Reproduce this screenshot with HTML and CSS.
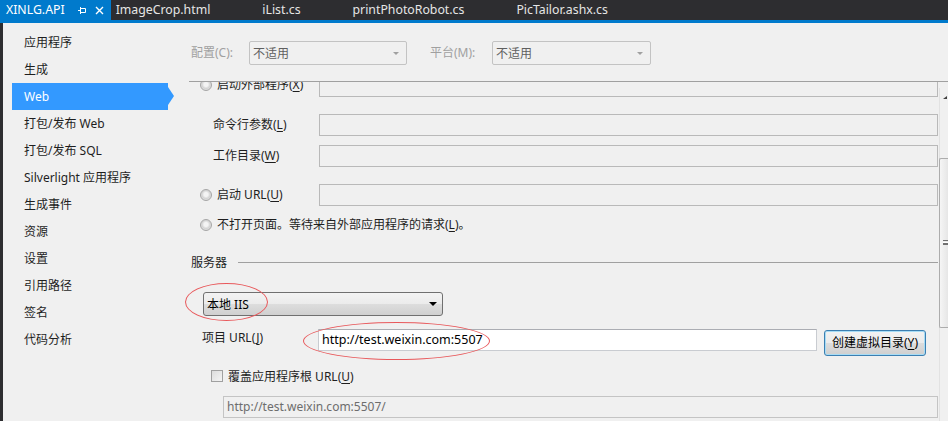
FILE: index.html
```html
<!DOCTYPE html>
<html lang="zh-CN">
<head>
<meta charset="utf-8">
<title>XINLG.API</title>
<link rel="stylesheet" href="styles.css">
</head>
<body>
<div class="tabs">
  <div class="tab active">
    <span>XINLG.API</span>
    <svg class="pin" width="8" height="8" viewBox="0 0 8 8"><path d="M0 4.5H2.5M2.5 1V8M2.5 2.5H7.5V6.5H2.5" fill="none" stroke="#fff" stroke-width="1"/></svg>
    <svg class="close" width="9" height="9" viewBox="0 0 9 9"><path d="M1 1L8 8M8 1L1 8" stroke="#fff" stroke-width="1.4"/></svg>
  </div>
  <div class="tab">ImageCrop.html</div>
  <div class="tab">iList.cs</div>
  <div class="tab">printPhotoRobot.cs</div>
  <div class="tab">PicTailor.ashx.cs</div>
</div>
<div class="tabline"></div>
<div class="app">
  <nav class="side">
    <div class="nav-item">应用程序</div>
    <div class="nav-item">生成</div>
    <div class="nav-item sel">Web</div>
    <div class="nav-item">打包/发布 Web</div>
    <div class="nav-item">打包/发布 SQL</div>
    <div class="nav-item">Silverlight 应用程序</div>
    <div class="nav-item">生成事件</div>
    <div class="nav-item">资源</div>
    <div class="nav-item">设置</div>
    <div class="nav-item">引用路径</div>
    <div class="nav-item">签名</div>
    <div class="nav-item">代码分析</div>
  </nav>
  <main class="page">
    <div class="config">
      <span class="cfg-label">配置(C):</span>
      <div class="cfg-select"><span>不适用</span><span class="cfg-arrow"></span></div>
      <span class="cfg-label plat">平台(M):</span>
      <div class="cfg-select wide"><span>不适用</span><span class="cfg-arrow"></span></div>
    </div>
    <div class="body">
      <div class="scroll">
        <div class="inner">
          <div class="row">
            <div class="rlbl first"><span class="radio"></span><span>启动外部程序(<u>X</u>)</span></div>
            <div class="field"></div>
          </div>
          <div class="row gap17">
            <div class="lbl">命令行参数(<u>L</u>)</div>
            <div class="field"></div>
          </div>
          <div class="row gap9">
            <div class="lbl">工作目录(<u>W</u>)</div>
            <div class="field"></div>
          </div>
          <div class="row gap17">
            <div class="rlbl"><span class="radio"></span><span>启动 URL(<u>U</u>)</span></div>
            <div class="field"></div>
          </div>
          <div class="rlbl solo"><span class="radio"></span><span>不打开页面。等待来自外部应用程序的请求(<u>L</u>)。</span></div>
          <div class="section"><span>服务器</span><span class="rule"></span></div>
          <div class="iis"><span>本地 IIS</span><span class="iis-arrow"></span></div>
          <div class="urlrow">
            <div class="url-label">项目 URL(<u>J</u>)</div>
            <div class="url-box">http://test.weixin.com:5507</div>
            <div class="btn">创建虚拟目录(<u>Y</u>)</div>
          </div>
          <div class="checkrow"><span class="check"></span><span>覆盖应用程序根 URL(<u>U</u>)</span></div>
          <div class="dis-box">http://test.weixin.com:5507/</div>
        </div>
      </div>
      <div class="vscroll">
        <div class="up"></div>
        <div class="thumb"><div class="grip"></div></div>
      </div>
    </div>
  </main>
</div>
<div class="mark mark-iis"></div>
<div class="mark mark-url"></div>
</body>
</html>
```
FILE: styles.css
```css
* { box-sizing: border-box; }
body {
  margin: 0;
  width: 948px;
  height: 421px;
  overflow: hidden;
  position: relative;
  background: #f0f0f0;
  font-family: "Noto Sans", "Noto Sans CJK SC", sans-serif;
  font-size: 12px;
  color: #1e1e1e;
}
u { text-decoration: underline; text-underline-offset: 2px; }

/* tabs */
.tabs {
  display: flex;
  height: 20px;
  background: #2d2d30;
  color: #e6e6e6;
  font-size: 12.3px;
  line-height: 20px;
}
.tab { padding: 0 47px 0 5px; white-space: nowrap; }
.tab.active {
  background: #007acc;
  color: #fff;
  display: flex;
  align-items: center;
  padding: 0 7px 0 6px;
}
.pin { margin-left: 13px; }
.close { margin-left: 9px; }
.tabline { height: 3px; background: #007acc; }

/* layout */
.app {
  display: flex;
  height: 398px;
  border-left: 3px solid #2d2d30;
}
.side { width: 186px; flex: none; padding-top: 6px; }
.nav-item {
  position: relative;
  margin-left: 9px;
  width: 156px;
  height: 27px;
  line-height: 27px;
  padding-left: 12px;
  white-space: nowrap;
}
.nav-item.sel { background: #3399ff; color: #fff; }
.nav-item.sel::after {
  content: "";
  position: absolute;
  left: 156px;
  top: 4px;
  border-left: 6px solid #3399ff;
  border-top: 9px solid transparent;
  border-bottom: 9px solid transparent;
}
.page { flex: 1; min-width: 0; display: flex; flex-direction: column; }

/* config row */
.config {
  height: 59px;
  display: flex;
  align-items: flex-start;
  padding: 18px 0 0 2px;
  border-bottom: 1px solid #a0a0a0;
}
.cfg-label { width: 58px; color: #a0a0a0; line-height: 24px; }
.cfg-label.plat { margin-left: 23px; width: 62px; }
.cfg-select {
  width: 158px;
  height: 24px;
  border: 1px solid #c3c3c3;
  border-radius: 2px;
  display: flex;
  align-items: center;
  justify-content: space-between;
  padding: 0 7px 0 3px;
  color: #5f5f5f;
}
.cfg-select.wide { width: 159px; }
.cfg-arrow {
  border-left: 3px solid transparent;
  border-right: 3px solid transparent;
  border-top: 3px solid #a0a0a0;
}

/* scrolled area */
.body { flex: 1; display: flex; min-height: 0; }
.scroll { flex: 1; overflow: hidden; }
.inner { margin-top: -7px; padding-right: 1px; }
.row {
  display: grid;
  grid-template-columns: 130px 1fr;
  align-items: center;
  height: 22px;
}
.gap17 { margin-top: 17px; }
.gap9 { margin-top: 9px; }
.field { height: 22px; border: 1px solid #b9b9b9; }
.lbl { padding-left: 24px; line-height: 20px; }
.rlbl {
  display: flex;
  align-items: center;
  gap: 5px;
  padding-left: 11px;
  line-height: 20px;
  white-space: nowrap;
}
.rlbl.first { margin-top: -3px; }
.rlbl.solo { margin-top: 8px; height: 22px; }
.radio {
  width: 12px;
  height: 12px;
  flex: none;
  border-radius: 50%;
  border: 1px solid #a6a6a6;
  background: radial-gradient(circle at 50% 45%, #f4f4f4 0 2px, #d4d4d4 4px, #e6e6e6 6px);
}
.section {
  display: flex;
  align-items: center;
  height: 20px;
  margin-top: 16px;
  padding-left: 2px;
}
.rule { flex: 1; height: 1px; background: #a0a0a0; margin-left: 11px; }
.iis {
  margin: 20px 0 0 14px;
  width: 240px;
  height: 24px;
  border: 1px solid #707070;
  border-radius: 3px;
  background: linear-gradient(#f3f3f3, #ebebeb 50%, #dddddd 50%, #d0d0d0);
  display: flex;
  align-items: center;
  justify-content: space-between;
  padding: 0 5px 0 3px;
  color: #000;
}
.iis-arrow {
  border-left: 4px solid transparent;
  border-right: 4px solid transparent;
  border-top: 4px solid #000;
}
.urlrow { display: flex; margin-top: 13px; height: 27px; }
.url-label { width: 129px; padding-left: 13px; line-height: 18px; }
.url-box {
  width: 499px;
  height: 22px;
  background: #fff;
  border: 1px solid #c9ccd1;
  border-top-color: #abadb3;
  padding-left: 3px;
  line-height: 20px;
  color: #000;
  font-size: 12.5px;
}
.btn {
  margin: 1px 0 0 7px;
  width: 102px;
  height: 26px;
  border: 1px solid #3c7fb1;
  border-radius: 3px;
  box-shadow: inset 0 0 0 1px #a7dcf5;
  background: linear-gradient(#f2f2f2, #ebebeb 50%, #dddddd 50%, #cfcfcf);
  text-align: center;
  line-height: 24px;
  color: #000;
}
.checkrow {
  display: flex;
  align-items: center;
  gap: 5px;
  height: 20px;
  margin-top: 10px;
  padding-left: 22px;
}
.check {
  width: 12px;
  height: 12px;
  border: 1px solid #a0a0a0;
  background: linear-gradient(135deg, #dcdcdc, #f4f4f4);
}
.dis-box {
  margin: 10px 0 0 34px;
  height: 22px;
  border: 1px solid #c4c4c4;
  padding-left: 3px;
  line-height: 20px;
  color: #6d6d6d;
}

/* scrollbar */
.vscroll {
  width: 9px;
  flex: none;
  margin-top: 6px;
  border-left: 1px solid #e2e2e2;
}
.up {
  margin: 8px 0 0 3px;
  width: 0;
  border-left: 4px solid transparent;
  border-bottom: 3px solid #404040;
}
.thumb {
  margin: 59px 0 0 -1px;
  height: 170px;
  border: 1px solid #acacac;
  border-right: none;
  border-radius: 2px 0 0 2px;
  background: linear-gradient(90deg, #f5f5f5, #e6e6e6);
  padding-top: 81px;
}
.grip {
  margin-left: 3px;
  height: 5px;
  border-top: 1px solid #707070;
  border-bottom: 1px solid #707070;
  background: linear-gradient(#fff 0 1px, #707070 1px 2px, transparent 2px);
  background-position: 0 1px;
  background-repeat: no-repeat;
}

/* red annotation marks */
.mark {
  position: absolute;
  border: 1px solid #e8585b;
  border-radius: 50%;
}
.mark-iis { left: 185px; top: 283px; width: 83px; height: 38px; }
.mark-url { left: 303px; top: 322px; width: 187px; height: 38px; }
```
